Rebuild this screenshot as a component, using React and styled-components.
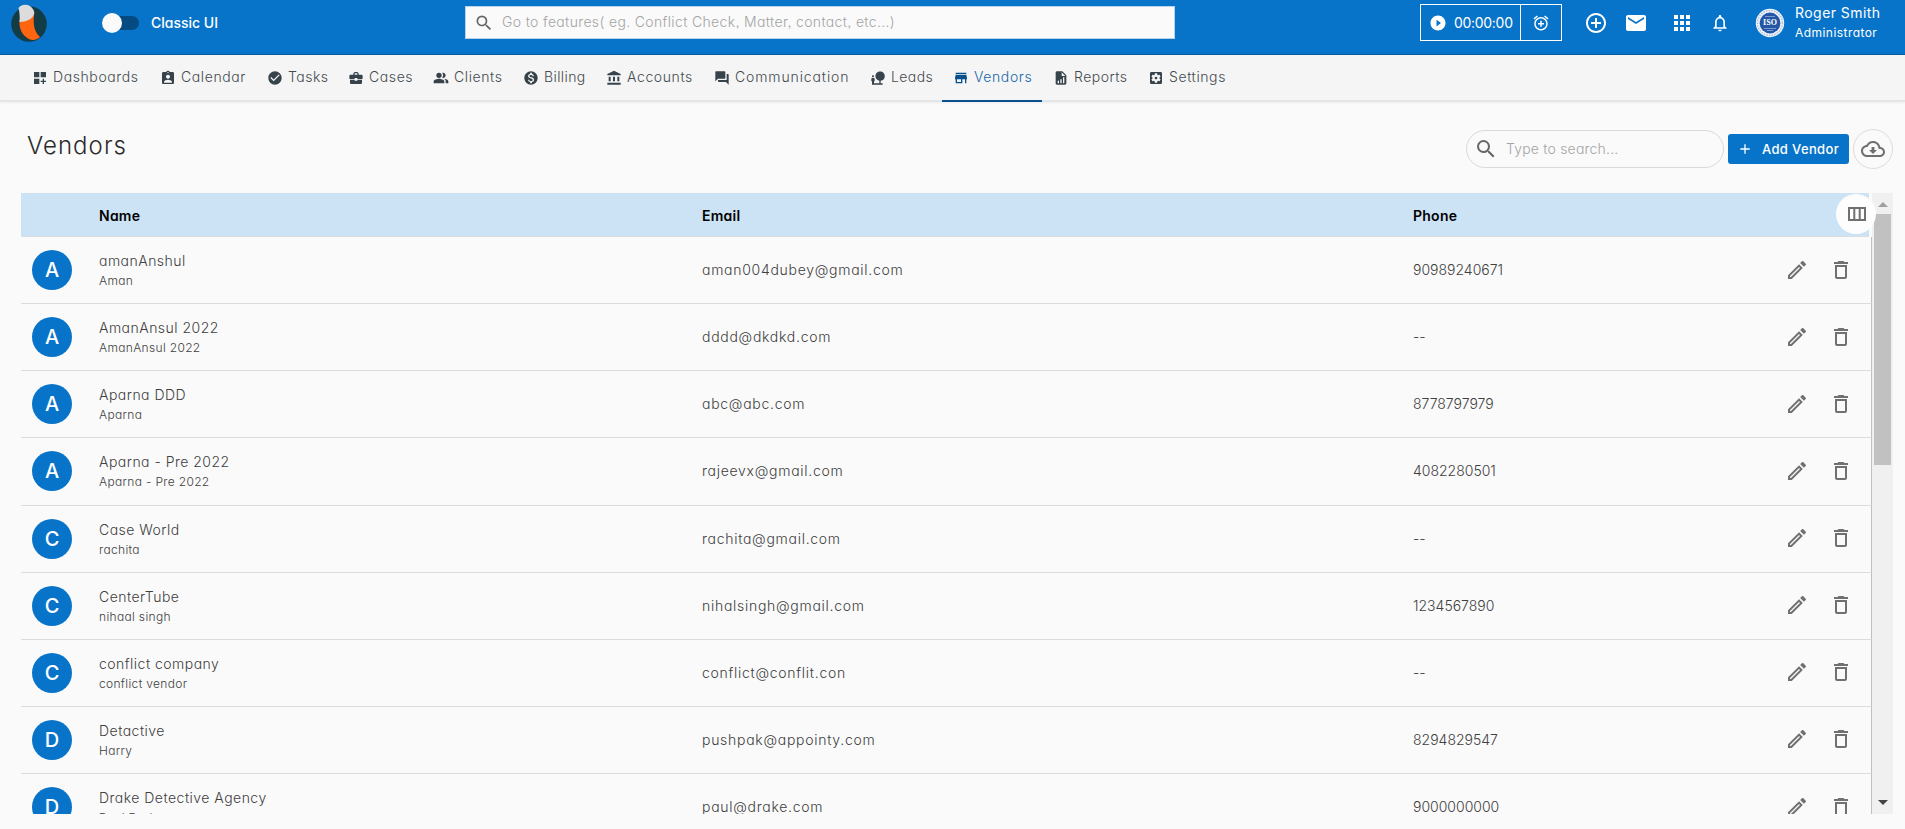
import React from 'react';
import styled, { createGlobalStyle } from 'styled-components';
import {
  MdDashboardCustomize,
  MdAssignmentInd,
  MdCheckCircle,
  MdBusinessCenter,
  MdPeopleAlt,
  MdMonetizationOn,
  MdAccountBalance,
  MdForum,
  MdNaturePeople,
  MdStore,
  MdSettingsApplications,
  MdSearch,
  MdPlayCircleFilled,
  MdAddAlarm,
  MdControlPoint,
  MdMail,
  MdApps,
  MdNotificationsNone,
  MdAdd,
  MdOutlineEdit,
  MdDeleteOutline,
} from 'react-icons/md';

const GlobalStyle = createGlobalStyle`
  * {
    box-sizing: border-box;
  }

  body {
    margin: 0;
    height: 829px;
    overflow: hidden;
    background: #fafafa;
    color: #404040;
    font-family: Inter, "Open Sans", sans-serif;
    font-feature-settings: "cv11", "ss03";
    font-size: 14px;
    font-weight: 300;
  }

  input, button {
    font: inherit;
    font-feature-settings: inherit;
    letter-spacing: inherit;
  }
`;

const TopBar = styled.header`
  display: flex;
  align-items: flex-start;
  height: 55px;
  background: #0874c9;
  border-bottom: 1px solid #0a5c9f;
  color: #fff;
`;

const Logo = styled.svg`
  width: 36px;
  height: 38px;
  margin: 4px 0 0 11px;
`;

const ClassicToggle = styled.div`
  display: flex;
  align-items: center;
  height: 20px;
  margin: 13px 0 0 55px;
  font-weight: 500;
`;

const ToggleTrack = styled.span`
  display: flex;
  align-items: center;
  width: 37px;
  height: 14px;
  margin-right: 12px;
  border-radius: 7px;
  background: #054a80;
`;

const ToggleKnob = styled.span`
  flex: none;
  width: 20px;
  height: 20px;
  border-radius: 50%;
  background: #fafafa;
`;

const ToggleLabel = styled.span`
  width: 68px;
  padding-bottom: 2px;
  white-space: nowrap;
`;

const FeatureSearch = styled.label`
  display: flex;
  align-items: center;
  gap: 8px;
  width: 710px;
  height: 33px;
  margin: 6px 0 0 246px;
  padding-left: 8px;
  background: #fafafa;
  border: 1px solid #b9d3ea;

  svg {
    width: 20px;
    height: 20px;
    color: #666;
  }
`;

const BareInput = styled.input`
  flex: 1;
  min-width: 0;
  padding: 0 0 2px;
  border: none;
  outline: none;
  background: none;
  letter-spacing: ${(p) => p.$spacing || '0'};

  &::placeholder {
    color: #a4a4a4;
    opacity: 1;
  }
`;

const Timer = styled.div`
  display: flex;
  width: 142px;
  height: 37px;
  margin: 4px 0 0 245px;
  border: 1px solid #fff;
  font-weight: 400;
  letter-spacing: -0.3px;
`;

const TimerClock = styled.div`
  display: flex;
  align-items: center;
  gap: 7px;
  width: 100px;
  padding-left: 8px;
  border-right: 1px solid #fff;
  white-space: nowrap;
`;

const TimerAlarm = styled.div`
  flex: 1;
  display: flex;
  align-items: center;
  justify-content: center;
`;

const TopIcons = styled.div`
  display: flex;
  align-items: center;
  height: 24px;
  margin: 11px 0 0 14px;
`;

const TopIcon = styled.span`
  display: flex;
  justify-content: center;
  width: ${(p) => p.$width}px;
`;

const Profile = styled.div`
  display: flex;
  margin-left: 23px;
`;

const Badge = styled.svg`
  width: 30px;
  height: 30px;
  margin-top: 8px;
`;

const ProfileText = styled.div`
  margin: 3px 0 0 10px;
  font-weight: 400;
  white-space: nowrap;
`;

const ProfileName = styled.div`
  line-height: 20px;
  letter-spacing: 0.45px;
`;

const ProfileRole = styled.div`
  font-size: 12px;
  line-height: 20px;
  letter-spacing: 0.45px;
`;

const NavBar = styled.nav`
  display: flex;
  height: 47px;
  padding-left: 21px;
  background: #f5f5f5;
  border-bottom: 2px solid #e3e5e6;
  box-shadow: 0 1px 3px rgba(0, 0, 0, 0.06);
`;

const NavItem = styled.a`
  display: flex;
  align-items: center;
  gap: 5.5px;
  width: ${(p) => p.$width}px;
  height: 47px;
  padding: 0 0 2px 10.5px;
  border-bottom: 2px solid ${(p) => (p.$active ? '#07508c' : 'transparent')};
  color: ${(p) => (p.$active ? '#1767a8' : '#434b50')};
  letter-spacing: ${(p) => p.$spacing || '0.6px'};
  white-space: nowrap;

  svg {
    flex: none;
    width: 16px;
    height: 16px;
    margin-top: 2px;
    color: ${(p) => (p.$active ? '#07508c' : '#37434b')};
  }
`;

const PageHead = styled.div`
  display: flex;
  align-items: flex-start;
  height: 91px;
  padding: 0 12px 0 27px;
`;

const Title = styled.h1`
  flex: 1;
  margin: 26px 0 0;
  color: #2b2b2b;
  font-size: 24px;
  font-weight: 300;
  line-height: 36px;
  letter-spacing: 1.05px;
`;

const VendorSearch = styled.label`
  display: flex;
  align-items: center;
  gap: 8px;
  width: 258px;
  height: 38px;
  margin: 28px 4px 0 0;
  padding: 0 8px 0 7px;
  border: 1px solid #d9d9d9;
  border-radius: 19px;

  svg {
    color: #666;
  }
`;

const AddButton = styled.button`
  display: flex;
  align-items: center;
  gap: 9px;
  width: 121px;
  height: 30px;
  margin: 32px 4px 0 0;
  padding: 0 0 1px 9px;
  border: none;
  border-radius: 3px;
  background: #0874c9;
  color: #fff;
  font-size: 13px;
  font-weight: 500;
  letter-spacing: 0.35px;
  white-space: nowrap;
`;

const ExportButton = styled.button`
  display: flex;
  align-items: center;
  justify-content: center;
  width: 40px;
  height: 40px;
  margin-top: 27px;
  padding: 0;
  border: 1px solid #dcdcdc;
  border-radius: 50%;
  background: none;
  color: #707070;
`;

const TableArea = styled.main`
  display: flex;
  height: 621px;
  margin-left: 21px;
  overflow: hidden;
`;

const Table = styled.div`
  position: relative;
  width: 1851px;
`;

const columns = '78px 603px 711px 1fr';

const HeadRow = styled.div`
  display: grid;
  grid-template-columns: ${columns};
  align-items: center;
  width: 1848px;
  height: 44px;
  padding-top: 1px;
  background: #cce2f5;
  border-bottom: 1px solid #d9dddf;
  color: #000;
  font-weight: 600;
  letter-spacing: 0.25px;
`;

const ColumnsButton = styled.button`
  position: absolute;
  top: 1px;
  right: -4px;
  z-index: 1;
  display: flex;
  align-items: center;
  justify-content: center;
  width: 40px;
  height: 40px;
  padding: 0 0 1px 1px;
  border: none;
  border-radius: 50%;
  background: #fdfdfd;
  color: #707070;
`;

const Row = styled.div`
  display: grid;
  grid-template-columns: ${columns};
  align-items: center;
  height: 67.14px;
  border-right: 1px solid #bfbfbf;
  border-bottom: 1px solid #dadcdd;
`;

const Avatar = styled.div`
  width: 40px;
  height: 40px;
  margin-left: 11px;
  border-radius: 50%;
  background: #0874c9;
  color: #fff;
  font-size: 20px;
  font-weight: 500;
  line-height: 41px;
  text-align: center;
`;

const VendorName = styled.div`
  padding-top: 1px;
  line-height: 22px;
  letter-spacing: 0.48px;
`;

const Contact = styled.div`
  padding-bottom: 2px;
  font-size: 12px;
  line-height: 17px;
  letter-spacing: 0.33px;
`;

const Email = styled.div`
  padding-bottom: 1px;
  letter-spacing: 0.72px;
`;

const PhoneCell = styled.div`
  display: flex;
  align-items: center;
  justify-content: space-between;
  padding: 0 18px 1px 0;
`;

const Actions = styled.div`
  display: flex;
  gap: 20px;
  color: #707070;
`;

const Scrollbar = styled.div`
  display: flex;
  flex-direction: column;
  align-items: center;
  width: 21px;
  background: #f0f0f0;
`;

const ScrollArrow = styled.span`
  width: 0;
  height: 0;
  margin: ${(p) => (p.$down ? 'auto 0 9px' : '9px 0 7px')};
  border-left: 5px solid transparent;
  border-right: 5px solid transparent;
  border-top: ${(p) => (p.$down ? '5px solid #444' : 'none')};
  border-bottom: ${(p) => (p.$down ? 'none' : '5px solid #a0a0a0')};
`;

const ScrollThumb = styled.span`
  width: 17px;
  height: 251px;
  background: #c1c1c1;
`;

const ReportIcon = () => (
  <svg viewBox="0 0 24 24" fill="currentColor">
    <path fillRule="evenodd" d="M14 2H6c-1.1 0-2 .9-2 2v16c0 1.1.9 2 2 2h12c1.1 0 2-.9 2-2V8l-6-6zM13 9V3.5L18.5 9H13zM7 20v-4h2v4H7zm4 0v-6h2v6h-2zm4 0v-9h2v9h-2z" />
  </svg>
);

const CloudDownloadIcon = () => (
  <svg width="24" height="24" viewBox="0 0 24 24" fill="currentColor">
    <path d="M19.35 10.04C18.67 6.59 15.64 4 12 4 9.11 4 6.6 5.64 5.35 8.04 2.34 8.36 0 10.91 0 14c0 3.31 2.69 6 6 6h13c2.76 0 5-2.24 5-5 0-2.64-2.05-4.78-4.65-4.96zM19 18H6c-2.21 0-4-1.79-4-4 0-2.05 1.53-3.76 3.56-3.97l1.07-.11.5-.95C8.08 7.14 9.94 6 12 6c2.62 0 4.88 1.86 5.39 4.43l.3 1.5 1.53.11c1.56.1 2.78 1.41 2.78 2.96 0 1.65-1.35 3-3 3zm-5.55-8h-2.9v3H8l4 4 4-4h-2.55z" />
  </svg>
);

const ColumnsIcon = () => (
  <svg width="18" height="14" viewBox="0 0 18 14" fill="none" stroke="currentColor" strokeWidth="2">
    <path d="M1 1h16v12H1zM6.3 1v12M11.7 1v12" />
  </svg>
);

const navItems = [
  { label: 'Dashboards', icon: MdDashboardCustomize, width: 128 },
  { label: 'Calendar', icon: MdAssignmentInd, width: 107 },
  { label: 'Tasks', icon: MdCheckCircle, width: 81, spacing: '0.5px' },
  { label: 'Cases', icon: MdBusinessCenter, width: 85 },
  { label: 'Clients', icon: MdPeopleAlt, width: 90 },
  { label: 'Billing', icon: MdMonetizationOn, width: 83, spacing: '0.4px' },
  { label: 'Accounts', icon: MdAccountBalance, width: 108 },
  { label: 'Communication', icon: MdForum, width: 156, spacing: '0.88px' },
  { label: 'Leads', icon: MdNaturePeople, width: 83, spacing: '0.4px' },
  { label: 'Vendors', icon: MdStore, width: 100, active: true },
  { label: 'Reports', icon: ReportIcon, width: 95, spacing: '0.5px' },
  { label: 'Settings', icon: MdSettingsApplications, width: 99 },
];

const vendors = [
  { name: 'amanAnshul', contact: 'Aman', email: 'aman004dubey@gmail.com', phone: '90989240671' },
  { name: 'AmanAnsul 2022', contact: 'AmanAnsul 2022', email: 'dddd@dkdkd.com', phone: '--' },
  { name: 'Aparna DDD', contact: 'Aparna', email: 'abc@abc.com', phone: '8778797979' },
  { name: 'Aparna - Pre 2022', contact: 'Aparna - Pre 2022', email: 'rajeevx@gmail.com', phone: '4082280501' },
  { name: 'Case World', contact: 'rachita', email: 'rachita@gmail.com', phone: '--' },
  { name: 'CenterTube', contact: 'nihaal singh', email: 'nihalsingh@gmail.com', phone: '1234567890' },
  { name: 'conflict company', contact: 'conflict vendor', email: 'conflict@conflit.con', phone: '--' },
  { name: 'Detactive', contact: 'Harry', email: 'pushpak@appointy.com', phone: '8294829547' },
  { name: 'Drake Detective Agency', contact: 'Paul Drake', email: 'paul@drake.com', phone: '9000000000' },
];

const App = () => {
  return (
    <>
      <GlobalStyle />
      <TopBar>
        <Logo viewBox="0 0 36 38">
          <circle cx="18" cy="20" r="17.8" fill="#123c46" />
          <path d="M8.5 16C14 19 20 15 23.5 8c-1.5 9-1.5 19 5.5 25-4 4-10 4-14 0C10 29 8 23 8.5 16z" fill="#ff6411" />
          <path d="M7.5 4c4-5 12-4 15 2 3 6-4 12-14 12C9 13 8.5 8 7.5 4z" fill="#dcdcdc" />
        </Logo>
        <ClassicToggle>
          <ToggleTrack>
            <ToggleKnob />
          </ToggleTrack>
          <ToggleLabel>Classic UI</ToggleLabel>
        </ClassicToggle>
        <FeatureSearch>
          <MdSearch />
          <BareInput $spacing="0.35px" placeholder="Go to features( eg. Conflict Check, Matter, contact, etc...)" />
        </FeatureSearch>
        <Timer>
          <TimerClock>
            <MdPlayCircleFilled size={18} />
            00:00:00
          </TimerClock>
          <TimerAlarm>
            <MdAddAlarm size={18} />
          </TimerAlarm>
        </Timer>
        <TopIcons>
          <TopIcon $width={40}><MdControlPoint size={24} /></TopIcon>
          <TopIcon $width={40}><MdMail size={24} /></TopIcon>
          <TopIcon $width={52}><MdApps size={24} /></TopIcon>
          <TopIcon $width={24}><MdNotificationsNone size={20} /></TopIcon>
        </TopIcons>
        <Profile>
          <Badge viewBox="0 0 30 30">
            <circle cx="15" cy="15" r="14.2" fill="#eef3fa" />
            <circle cx="15" cy="15" r="12.4" fill="none" stroke="#a9bddb" strokeWidth="1.4" strokeDasharray="1.5 1.2" />
            <circle cx="15" cy="15" r="10.4" fill="#2458a6" />
            <path d="M10 8.5h10M9 20.5h12M12 22.5h6" stroke="#8fabd6" strokeWidth="0.8" />
            <text x="15" y="17" fill="#fff" fontFamily="Liberation Serif, serif" fontSize="8" fontWeight="700" textAnchor="middle">ISO</text>
          </Badge>
          <ProfileText>
            <ProfileName>Roger Smith</ProfileName>
            <ProfileRole>Administrator</ProfileRole>
          </ProfileText>
        </Profile>
      </TopBar>

      <NavBar>
        {navItems.map(({ label, icon: Icon, width, active, spacing }) => (
          <NavItem key={label} $width={width} $active={active} $spacing={spacing}>
            <Icon />
            {label}
          </NavItem>
        ))}
      </NavBar>

      <PageHead>
        <Title>Vendors</Title>
        <VendorSearch>
          <MdSearch size={24} />
          <BareInput $spacing="0.2px" placeholder="Type to search..." />
        </VendorSearch>
        <AddButton>
          <MdAdd size={16} />
          Add Vendor
        </AddButton>
        <ExportButton>
          <CloudDownloadIcon />
        </ExportButton>
      </PageHead>

      <TableArea>
        <Table>
          <HeadRow>
            <span />
            <span>Name</span>
            <span>Email</span>
            <span>Phone</span>
          </HeadRow>
          <ColumnsButton>
            <ColumnsIcon />
          </ColumnsButton>
          {vendors.map((vendor) => (
            <Row key={vendor.name}>
              <Avatar>{vendor.name[0].toUpperCase()}</Avatar>
              <div>
                <VendorName>{vendor.name}</VendorName>
                <Contact>{vendor.contact}</Contact>
              </div>
              <Email>{vendor.email}</Email>
              <PhoneCell>
                {vendor.phone}
                <Actions>
                  <MdOutlineEdit size={24} />
                  <MdDeleteOutline size={24} />
                </Actions>
              </PhoneCell>
            </Row>
          ))}
        </Table>
        <Scrollbar>
          <ScrollArrow />
          <ScrollThumb />
          <ScrollArrow $down />
        </Scrollbar>
      </TableArea>
    </>
  );
};

export default App;
